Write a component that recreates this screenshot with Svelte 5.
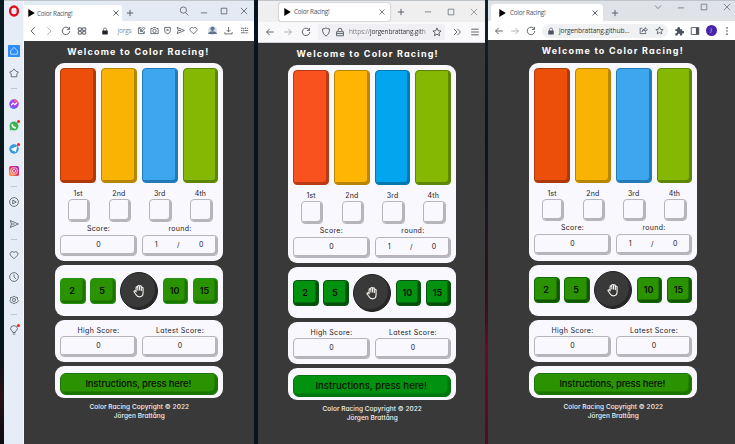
<script>
  const opera = {
    id: 'opera',
    side: ['home', 'star5', '-', 'messenger', 'whatsapp', 'telegram', 'instagram', '-', 'play', 'send', '-', 'heart', 'clock', 'gear', '-', 'bulb'],
    frame: ['search', 'min', 'max', 'close'],
    nav: ['chevL', 'chevR', 'reload', 'grid'],
    address: ['edit', 'camera', 'shieldx', 'send', 'heart'],
    tail: ['person', 'download', 'sliders']
  };
  const firefox = {
    id: 'firefox',
    frame: ['min', 'max', 'close'],
    nav: ['back', 'forward', 'reload'],
    tail: ['more', 'menu']
  };
  const chrome = {
    id: 'chrome',
    frame: ['chevD', 'min', 'max', 'close'],
    nav: ['back', 'forward', 'reload'],
    tail: ['puzzle', 'panel', 'avatar', 'dots']
  };
  const browsers = [opera, firefox, chrome];
  const places = ['1st', '2nd', '3rd', '4th'];
  const colors = ['red', 'yellow', 'blue', 'lime'];

  const paths = {
    search: 'M10.5 10.5L15 15M12 6.500A5 5 0 1 1 2 6.500A5 5 0 1 1 12 6.500',
    min: 'M3 11H13',
    max: 'M3.500 3.500H12.500V12.500H3.500Z',
    close: 'M3 3L13 13M13 3L3 13',
    plus: 'M8 3V13M3 8H13',
    chevL: 'M10.500 2L5 8L10.500 14',
    chevR: 'M5.500 2L11 8L5.500 14',
    chevD: 'M3 5.500L8 10.500L13 5.500',
    back: 'M14 8H2.500M7.500 3L2.500 8L7.500 13',
    forward: 'M2 8H13.500M8.500 3L13.500 8L8.500 13',
    reload: 'M13 4.500A6 6 0 1 0 14 8M13.500 1.500V5.500H9.500',
    grid: 'M2 3H7V7H2ZM9 3H14V7H9ZM2 9H7V13H2ZM9 9H14V13H9Z',
    edit: 'M8 3H2.500V13.500H13V9M6 10V7.500L12 2L14 4L8.500 10ZM4 4L12 12',
    camera: 'M1.500 4.500H4.500L6 2.500H10L11.500 4.500H14.500V13.500H1.500ZM11 8.800A3 3 0 1 1 5 8.800A3 3 0 1 1 11 8.800',
    shieldx: 'M3 2.500H13V9Q13 12 8 14Q3 12 3 9ZM6 5L10 9M10 5L6 9',
    shield: 'M8 1.500Q11 3 13.500 3Q14 11 8 14.500Q2 11 2.500 3Q5 3 8 1.500Z',
    send: 'M2 2.500L15 8L2 13.500L4 8ZM4 8H9',
    heart: 'M8 14L2.500 8.500A3.500 3.500 0 0 1 8 4A3.500 3.500 0 0 1 13.500 8.500Z',
    download: 'M8 2V10M4.500 7L8 10.500L11.500 7M1.500 11V14H14.500V11',
    sliders: 'M1.500 4H8M12 4H14.500M1.500 8H4M8 8H14.500M1.500 12H9M13 12H14.500M10 2.500V5.500M6 6.500V9.500M11 10.500V13.500',
    more: 'M3 3L8 8L3 13M8.500 3L13.500 8L8.500 13',
    menu: 'M2 3.500H14M2 8H14M2 12.500H14',
    star: 'M8 1.500L10 6L14.500 6.400L11 9.500L12.200 14L8 11.500L3.800 14L5 9.500L1.500 6.400L6 6Z',
    share: 'M6 4H2V13.500H12V11M5 10Q6 5.500 11 5.500V3L15 6.500L11 10V7.500Q7 7.500 5 10Z',
    star5: 'M8 1.500L11 5L15 6.500L12.500 9.500V14H3.500V9.500L1 6.500L5 5Z',
    play: 'M15 8A7 7 0 1 1 1 8A7 7 0 1 1 15 8M6 5V11L11.500 8Z',
    clock: 'M15 8A7 7 0 1 1 1 8A7 7 0 1 1 15 8M8 4V8L11 11',
    gear: 'M8 1.500L10 3.500L13.500 4L13.500 7L15 9L13 12L10 12.500L8 14.500L6 12.500L3 12L1.500 9L2.500 7V4L6 3.500ZM10.500 8A2.500 2.500 0 1 1 5.500 8A2.500 2.500 0 1 1 10.500 8',
    bulb: 'M6 12V10.500Q2.500 8.500 2.500 6A5.500 5 0 0 1 13.500 6Q13.500 8.500 10 10.500V12ZM6 14.500H10'
  };
</script>

{#snippet icon(name)}
  <svg class="icon i-{name}" viewBox="0 0 16 16">
    {#if name === 'lock'}
      <path d="M5 8V5A3 3 0 0 1 11 5V8" /><rect class="solid" x="2.500" y="7" width="11" height="8" rx="1" />
    {:else if name === 'lockline'}
      <path d="M5 7V5A3 3 0 0 1 11 5V7M2.500 7.500H13.500V14H2.500ZM3 10.500H13" />
    {:else if name === 'person'}
      <circle class="halo" cx="8" cy="8" r="8" /><circle class="bust" cx="8" cy="5" r="3.800" /><path class="bust" d="M0 14Q1 9.500 8 9.500Q15 9.500 16 14Z" />
    {:else if name === 'puzzle'}
      <path class="solid" d="M2 5H5.500A2.300 2.300 0 1 1 9.500 5H13V8A2.200 2.200 0 1 1 13 11.500V15H9.500A2 2 0 1 0 6 15H2V11.500A2 2 0 1 0 2 8Z" />
    {:else if name === 'panel'}
      <path d="M2 2.500H14V13.500H2Z" /><rect class="solid" x="9.500" y="2.500" width="4.500" height="11" />
    {:else if name === 'dots'}
      <circle class="solid" cx="8" cy="3" r="1.300" /><circle class="solid" cx="8" cy="8" r="1.300" /><circle class="solid" cx="8" cy="13" r="1.300" />
    {:else if name === 'home'}
      <rect width="16" height="16" fill="#2f8dfa" stroke="none" rx="1" /><path d="M3.500 7.500L8 3.300L12.500 7.500V12.300H3.500Z" stroke="#b9dcff" />
    {:else if name === 'messenger'}
      <circle cx="8" cy="8" r="7.600" fill="#a341f5" stroke="none" /><path d="M1 11A7.600 7.600 0 0 0 11 15Z" fill="#3c7dff" stroke="none" /><path d="M8 .400A7.600 7.600 0 0 1 15.500 8L8 4Z" fill="#f2608d" stroke="none" /><path d="M3.500 10L6.500 6.500L9.500 9L12.500 6" stroke="#fff" stroke-width="2" />
    {:else if name === 'whatsapp'}
      <circle cx="8" cy="8" r="7.200" fill="#3fb455" stroke="none" /><path d="M1 15L2 10L6 14Z" fill="#3fb455" stroke="none" /><path d="M5 5Q5 10 11 11" stroke="#fff" stroke-width="2.500" />
    {:else if name === 'telegram'}
      <circle cx="8" cy="8" r="7.600" fill="#359bd8" stroke="none" /><path d="M2.500 8L13 3.500L11 13L7.500 10.500L6 12L5.500 9Z" fill="#fff" stroke="none" />
    {:else if name === 'instagram'}
      <rect width="16" height="16" rx="3" fill="url(#insta)" stroke="none" /><rect x="3" y="3" width="10" height="10" rx="3" stroke="#fff" /><circle cx="8" cy="8" r="2.500" stroke="#fff" />
    {:else}
      <path d={paths[name]} />
    {/if}
  </svg>
{/snippet}

{#snippet tabstrip(b)}
  <div class="tabs">
    <div class="tab">
      <svg class="fav" viewBox="0 0 7 8"><path d="M.300 0L6.800 4L.300 8Z" /></svg>
      <span>Color Racing!</span>
      {@render icon('close')}
    </div>
    {@render icon('plus')}
    <div class="frame">{#each b.frame as n}{@render icon(n)}{/each}</div>
  </div>
{/snippet}

{#snippet toolbar(b)}
  <div class="bar">
    <div class="nav">{#each b.nav as n}{@render icon(n)}{/each}</div>
    <div class="field">
      {#if b.id === 'opera'}
        {@render icon('lock')}<span class="url">jorgs</span>
        <div class="acts">{#each b.address as n}{@render icon(n)}{/each}</div>
      {:else if b.id === 'firefox'}
        {@render icon('shield')}{@render icon('lockline')}
        <span class="url"><i>https://</i>jorgenbrattang.gith</span>{@render icon('star')}
      {:else}
        {@render icon('lock')}<span class="url">jorgenbrattang.github...</span>{@render icon('share')}{@render icon('star')}
      {/if}
    </div>
    <div class="tail">
      {#each b.tail as n}
        {#if n === 'avatar'}<span class="avatar">J</span>{:else}{@render icon(n)}{/if}
      {/each}
    </div>
  </div>
{/snippet}

{#snippet game()}
  <main>
    <h1>Welcome to Color Racing!</h1>
    <section class="race">
      <div class="lanes">{#each colors as c}<div class="lane {c}"></div>{/each}</div>
      <div class="places">
        {#each places as p}<div class="place"><span>{p}</span><div class="box"></div></div>{/each}
      </div>
      <div class="pair">
        <div class="stat"><span>Score:</span><div class="box">0</div></div>
        <div class="stat"><span>round:</span><div class="box three"><b>1</b><b>/</b><b>0</b></div></div>
      </div>
    </section>
    <section class="bets">
      <button>2</button><button>5</button>
      <div class="stop">
        <svg viewBox="0 0 24 24"><path d="M7 13V6.500a1.500 1.500 0 0 1 3 0V11V4a1.500 1.500 0 0 1 3 0V11V4.500a1.500 1.500 0 0 1 3 0V12V7a1.500 1.500 0 0 1 3 0V15Q19 22 12.500 22Q9 22 7 18.500L3.500 13.500Q3 11.500 5 11.700Z" /></svg>
      </div>
      <button>10</button><button>15</button>
    </section>
    <section class="scores">
      <div class="pair">
        <div class="stat"><span>High Score:</span><div class="box">0</div></div>
        <div class="stat"><span>Latest Score:</span><div class="box">0</div></div>
      </div>
    </section>
    <section class="help"><button>Instructions, press here!</button></section>
    <footer>Color Racing Copyright © 2022<br />Jörgen Brattång</footer>
  </main>
{/snippet}

<svg class="defs" width="0" height="0">
  <linearGradient id="insta" x1="0" y1="1" x2="1" y2="0">
    <stop offset="0" stop-color="#fdb536" /><stop offset=".5" stop-color="#ee2a5c" /><stop offset="1" stop-color="#8a2be0" />
  </linearGradient>
</svg>
<div class="desktop">
  {#each browsers as b}
    <div class="window {b.id}">
      {#if b.side}
        <aside>
          <svg class="logo" viewBox="0 0 16 16"><ellipse cx="8" cy="8" rx="5.200" ry="6" /></svg>
          {#each b.side as n}
            {#if n === '-'}<div class="dash"><hr /></div>
            {:else}<div class="cell">{@render icon(n)}{#if ['whatsapp', 'telegram', 'bulb'].includes(n)}<em></em>{/if}</div>{/if}
          {/each}
        </aside>
      {/if}
      <div class="view">
        {@render tabstrip(b)}
        {@render toolbar(b)}
        {@render game()}
      </div>
    </div>
  {/each}
</div>

<style>
  :global(body) { background: #06131b; }
  .defs { position: absolute; }
  .desktop {
    box-sizing: border-box; width: 735px; height: 444px; padding-left: 4px; overflow: hidden; display: flex;
    font-family: "Open Sans", "Noto Sans", sans-serif;
    background:
      linear-gradient(#08242c, #081522 30%, #33131f 70%, #6b0a24 78%, #540b20) 485px 0 / 3px 444px no-repeat,
      linear-gradient(#081a22, #07131a 80%, #2a1019 89%, #0c0d12) 0 0 / 4px 444px no-repeat, #061420;
  }
  .window { display: flex; height: 444px; box-sizing: border-box; border-top: 1px solid #bfc4c9; background: #393939; }
  .opera { width: 250px; margin-right: 4px; }
  .firefox { width: 227px; margin-right: 3px; }
  .chrome { width: 247px; }
  .view { flex: 1; min-width: 0; }

  .icon { width: 10px; height: 10px; flex: none; fill: none; stroke: #4c525c; stroke-width: 1.4; display: block; }
  .icon .solid { fill: #4c525c; stroke: none; }
  .icon .halo { fill: #d6deea; stroke: none; }
  .icon .bust { fill: #62748d; stroke: none; }
  .i-chevR, .i-forward { opacity: .5; }

  aside { width: 20px; box-sizing: border-box; background: #e6edf6; border-right: 1px solid #f6f9fc; }
  .logo { display: block; width: 12px; height: 12px; margin: 3.500px 0 22.750px 4px; fill: none; stroke: #e0101f; stroke-width: 3.200; }
  .cell { height: 22.500px; display: flex; align-items: center; padding-left: 5px; position: relative; }
  .cell .icon { stroke-width: 1.250; }
  .cell .i-home { width: 12px; height: 12px; margin-left: -1px; }
  .cell em { position: absolute; left: 12.500px; top: 5.500px; width: 3px; height: 3px; border-radius: 50%; background: #f2211d; }
  .dash { height: 8px; display: flex; align-items: center; padding-left: 7px; }
  hr { width: 6px; height: 1px; margin: 0; border: 0; background: #bcc6d2; }

  .tabs { display: flex; align-items: center; height: 20px; background: #e4eaf3; }
  .tab { display: flex; align-items: center; box-sizing: border-box; background: #fff; font-size: 6.300px; color: #4e545d; letter-spacing: -.220px; white-space: nowrap; }
  .tab .icon { margin-left: auto; width: 8px; height: 8px; stroke-width: 1.800; }
  .fav { width: 7px; height: 8px; flex: none; }
  .frame, .nav, .tail, .field, .bar, .acts { display: flex; align-items: center; }
  .frame { margin-left: auto; }
  .bar { height: 19.500px; background: #fff; box-sizing: border-box; }
  .url { white-space: nowrap; color: #34373d; font-size: 6.600px; letter-spacing: -.100px; }
  .url i { font-style: normal; color: #85858c; }

  .opera .tab { width: 98px; height: 16px; margin-top: 4px; padding: 0 2px 0 4px; border-radius: 2px 2px 0 0; }
  .opera .fav { margin-right: 2px; }
  .opera .i-plus { margin-left: 3px; margin-top: 3px; }
  .opera .frame { gap: 10px; padding-right: 5px; }
  .opera .frame .icon { stroke-width: 1.200; }
  .opera .nav { gap: 6.300px; padding-left: 4px; }
  .opera .field { padding-left: 13.500px; }
  .opera .url { width: 16px; margin: 0 3px 0 7px; color: #858b94; font-size: 6.400px; }
  .opera .acts { gap: 4px; padding: 0 .500px; }
  .opera .acts .icon { width: 9px; height: 9px; }
  .opera .tail { gap: 6px; margin-left: auto; padding-right: 5px; }
  .opera .tail .icon { width: 9px; height: 9px; margin: 0 .500px; }
  .opera .i-lock { width: 8px; height: 8px; margin: 0 1px; }
  .opera .i-lock .solid { fill: #20242a; }

  .firefox .tabs { height: 21px; background: #efeff0; }
  .firefox .tab { width: 111px; height: 18px; margin-left: 21px; padding: 0 4px 0 5px; border-radius: 2px; box-shadow: 0 0 1.500px #77777f; }
  .firefox .fav { margin-right: 3px; }
  .firefox .i-plus { margin-left: 6px; }
  .firefox .frame { gap: 13px; padding-right: 6.500px; }
  .firefox .frame .icon { stroke-width: 1; }
  .firefox .i-min { margin-top: -3px; }
  .firefox .i-close { opacity: .8; }
  .firefox .bar { height: 20.700px; background: #f9f9fb; border-bottom: 1px solid #cfcfd3; }
  .firefox .nav { gap: 8px; padding-left: 7px; }
  .firefox .field { width: 127px; height: 16px; box-sizing: border-box; margin-left: 7px; padding: 0 3px 0 2.500px; border-radius: 2px; background: #f0f0f4; }
  .firefox .i-lockline { margin-left: 4.500px; }
  .firefox .url { width: 83px; margin: 0 auto 0 4px; font-size: 6.500px; letter-spacing: -.150px; -webkit-mask-image: linear-gradient(90deg, #000 82%, #0003); mask-image: linear-gradient(90deg, #000 82%, #0003); }
  .firefox .tail { gap: 8px; margin-left: auto; padding-right: 5px; }

  .chrome .tabs { background: #dfe2e7; }
  .chrome .tab { width: 112px; height: 17px; margin: 3px 0 0 3px; padding: 0 4px 0 8px; border-radius: 4px 4px 0 0; }
  .chrome .fav { margin-right: 4px; }
  .chrome .i-plus { margin-left: 6.500px; margin-top: 4px; }
  .chrome .frame { gap: 13px; padding-right: 3.500px; margin-top: -8px; }
  .chrome .frame .icon { stroke-width: 1; }
  .chrome .i-min { margin-top: -3px; }
  .chrome .bar { height: 19.200px; }
  .chrome .nav { gap: 6px; padding-left: 6px; }
  .chrome .field { width: 126px; height: 14px; box-sizing: border-box; margin-left: 6px; padding: 0 4px; border-radius: 7px; background: #eff1f3; }
  .chrome .url { width: 76px; margin: 0 0 0 3px; }
  .chrome .i-lock { width: 8px; height: 8px; margin: 0 1px; }
  .chrome .i-share { width: 9px; height: 9px; margin-left: auto; }
  .chrome .i-star { width: 9px; height: 9px; margin-left: 7px; }
  .chrome .tail { gap: 6px; margin-left: auto; padding-right: 3px; }
  .avatar { width: 11px; height: 11px; margin: 0 -.500px; border-radius: 50%; background: #4b23a8; color: #d9d0f2; font-size: 6px; line-height: 11px; text-align: center; }

  main { box-sizing: border-box; padding-top: 22.500px; display: flex; flex-direction: column; gap: 4px; background: #393939; color: #202020; font-family: Inter, "Open Sans", sans-serif; font-feature-settings: "cv11"; }
  .opera main { padding-left: 31.300px; }
  .firefox main { padding-left: 30.200px; }
  .chrome main { padding-left: 41.300px; }
  h1 { margin: -18.500px 0 .500px -1px; width: 168px; height: 14px; line-height: 14px; font-size: 9px; font-weight: 700; letter-spacing: 1.200px; text-align: center; white-space: nowrap; color: #fff; }
  .firefox h1 { margin-left: -4.500px; }
  .chrome h1 { margin-left: -.500px; }
  section { width: 168px; box-sizing: border-box; background: #faf8ff; border-radius: 9px; padding: 5px; }
  .race { height: 198px; }
  .bets { height: 51px; display: flex; align-items: center; justify-content: space-between; }
  .scores { height: 42px; }
  .help { height: 32px; }
  .lanes { display: flex; gap: 5px; height: 115px; }
  .lane { flex: 1; box-sizing: border-box; border: 1px solid var(--d); border-radius: 4px; background: var(--c); box-shadow: inset -2px -2px 0 var(--d); }
  .red { --c: #eb4f09; --d: #ad380a; }
  .yellow { --c: #f9b302; --d: #b78502; }
  .blue { --c: #3ca6ef; --d: #237ab7; }
  .lime { --c: #84b802; --d: #5d8604; }
  .firefox .red { --c: #f9521e; --d: #b83b13; }
  .firefox .yellow { --c: #ffb501; }
  .firefox .blue { --c: #02a5ee; --d: #0278b0; }
  .places, .pair { display: flex; gap: 5px; }
  .place { flex: 1; display: flex; flex-direction: column; align-items: center; padding-top: 5px; }
  .place span, .stat span { height: 11px; line-height: 11px; font-size: 7px; letter-spacing: .150px; white-space: nowrap; }
  .box { box-sizing: border-box; border: 1px solid #b7b4bb; border-radius: 4px; box-shadow: inset -2px -2px 0 #b7b4bb; font-size: 7px; }
  .place .box { width: 22.500px; height: 22.500px; margin-left: 2px; }
  .stat { flex: 1; display: flex; flex-direction: column; align-items: center; }
  .stat span { letter-spacing: .320px; }
  .race .stat { padding-top: 1px; }
  .race .stat span { height: 12px; }
  .stat .box { width: 100%; height: 21px; line-height: 18px; text-align: center; }
  .three { display: flex; justify-content: space-between; padding: 0 14px 0 12px; }
  .three b { font-weight: 400; }
  button { box-sizing: border-box; width: 25.500px; height: 26px; margin: 0; padding: 0 2px 1px 0; border: 1px solid var(--e); border-radius: 4px; background: #2b9201; box-shadow: inset -2.500px -2.500px 0 var(--s); font: 600 9px Inter, sans-serif; color: #061002; }
  .opera { --e: #249112; --s: #1d7300; }
  .firefox { --e: #075311; --s: #045009; }
  .firefox button { background: #03920f; }
  .chrome { --e: #0d6b04; --s: #125700; }
  .help button { width: 100%; height: 22px; border-radius: 6px; font: 500 9.500px Inter, sans-serif; font-feature-settings: "cv11"; letter-spacing: -.170px; white-space: nowrap; border-color: #1c7607; box-shadow: inset -2.500px -2.500px 0 #1c7500; }
  .firefox .help button { border-color: #047310; box-shadow: inset -2.500px -2.500px 0 #037510; letter-spacing: .060px; }
  .stop { box-sizing: border-box; width: 38px; height: 38px; display: flex; align-items: center; justify-content: center; border-radius: 50%; background: #393939; border: 1px solid #202020; box-shadow: inset -2px -2px 0 #272727; }
  .stop svg { width: 14px; height: 14px; margin-right: 1px; fill: none; stroke: #f5f2ef; stroke-width: 1.900; }
  footer { width: 168px; padding-top: 1px; text-align: center; color: #f2f2f2; font-size: 6.500px; font-weight: 500; line-height: 9.300px; letter-spacing: .050px; }
</style>
